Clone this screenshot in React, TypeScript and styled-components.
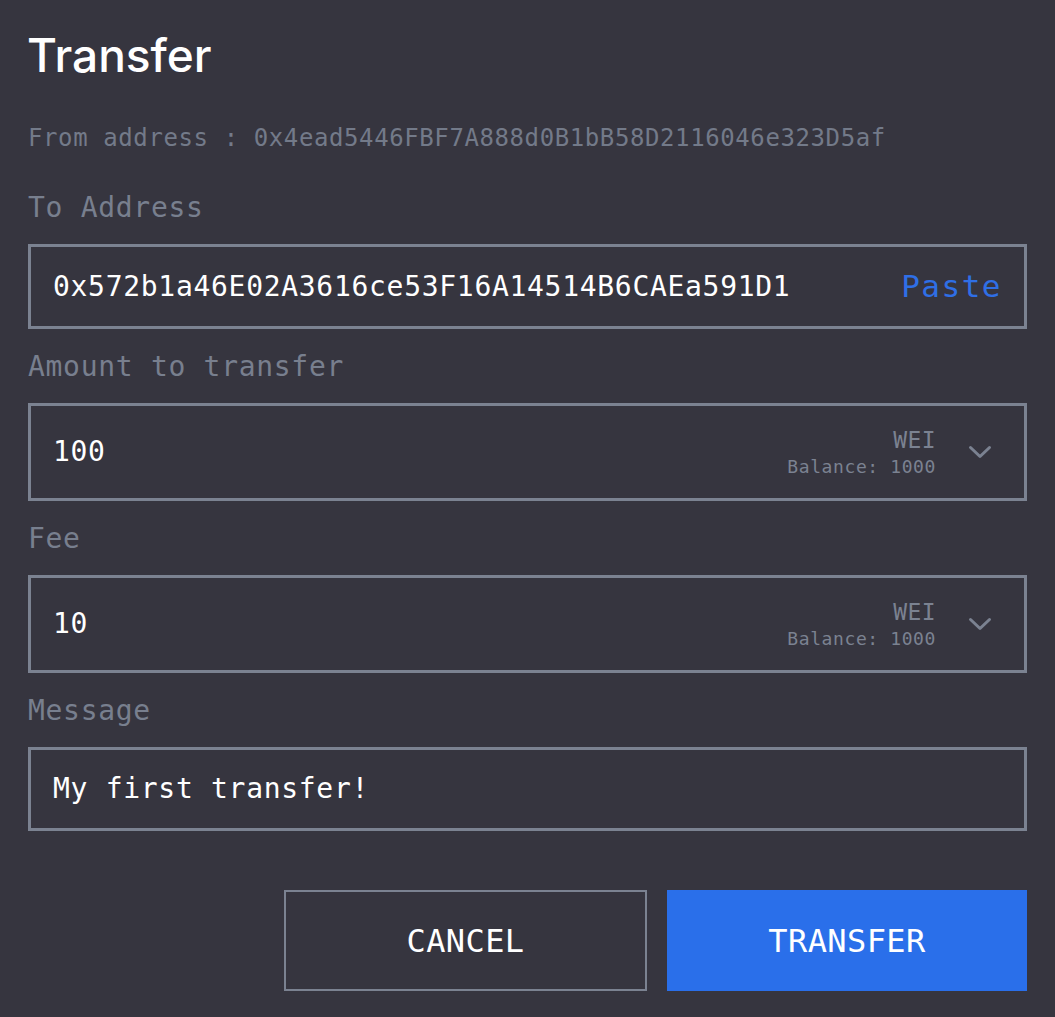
import { FC } from "react";
import styled, { createGlobalStyle } from "styled-components";

const GlobalStyle = createGlobalStyle`
  html, body {
    margin: 0;
    padding: 0;
    background-color: #36353f;
  }
  * {
    box-sizing: border-box;
  }
`;

const mono = `"DejaVu Sans Mono", "Liberation Mono", monospace`;

const Panel = styled.div`
  display: flex;
  flex-direction: column;
  padding: 32px 28px 0;
  width: 1055px;
`;

const Title = styled.h1`
  margin: 0 0 0 -1px;
  font-family: Inter, "Noto Sans", sans-serif;
  font-size: 46px;
  font-weight: 500;
  line-height: 46px;
  color: #ffffff;
`;

const FromLine = styled.p`
  margin: 48px 0 0;
  font-family: ${mono};
  font-size: 24px;
  line-height: 24px;
  letter-spacing: 0.6px;
  color: #737a89;
`;

const Form = styled.div`
  display: flex;
  flex-direction: column;
  gap: 24px;
  margin-top: 44px;
`;

const Field = styled.div`
  display: flex;
  flex-direction: column;
  gap: 22px;
`;

const Label = styled.label`
  font-family: ${mono};
  font-size: 28px;
  line-height: 28px;
  letter-spacing: 0.7px;
  color: #787f8e;
`;

const Box = styled.div<{ $height: number }>`
  display: flex;
  align-items: center;
  height: ${(p) => p.$height}px;
  border: 3px solid #7b8291;
  padding: 0 32px 0 22px;
`;

const Value = styled.span`
  flex: 1;
  font-family: ${mono};
  font-size: 28px;
  line-height: 28px;
  letter-spacing: 0.7px;
  color: #ffffff;
  white-space: nowrap;
`;

const PasteButton = styled.span`
  margin-right: -10px;
  font-family: ${mono};
  font-size: 31px;
  line-height: 31px;
  letter-spacing: 1.5px;
  color: #2f6fe6;
  cursor: pointer;
`;

const Unit = styled.div`
  display: flex;
  flex-direction: column;
  align-items: flex-end;
  gap: 6px;
  margin-right: 32px;
  font-family: ${mono};
  color: #7b8291;
`;

const UnitName = styled.span`
  font-size: 23px;
  line-height: 23px;
  letter-spacing: 0.4px;
`;

const Balance = styled.span`
  font-size: 18px;
  line-height: 18px;
  letter-spacing: 0.6px;
`;

const Chevron = () => (
  <svg width="24" height="15" viewBox="0 0 24 15" fill="none">
    <polyline
      points="2.5,2.5 12,11.5 21.5,2.5"
      stroke="#7b8291"
      strokeWidth="3"
      strokeLinecap="round"
      strokeLinejoin="round"
    />
  </svg>
);

const Actions = styled.div`
  display: flex;
  justify-content: flex-end;
  gap: 20px;
  margin-top: 59px;
`;

const Button = styled.button<{ $primary?: boolean }>`
  width: ${(p) => (p.$primary ? 360 : 363)}px;
  height: 101px;
  border: ${(p) => (p.$primary ? "none" : "2px solid #7b8291")};
  background-color: ${(p) => (p.$primary ? "#2a6fea" : "transparent")};
  color: #ffffff;
  font-family: ${mono};
  font-size: 32px;
  letter-spacing: 0.4px;
  cursor: pointer;
`;

interface AmountFieldProps {
  label: string;
  value: string;
  unit: string;
  balance: string;
}

const AmountField: FC<AmountFieldProps> = ({ label, value, unit, balance }) => (
  <Field>
    <Label>{label}</Label>
    <Box $height={98}>
      <Value>{value}</Value>
      <Unit>
        <UnitName>{unit}</UnitName>
        <Balance>Balance: {balance}</Balance>
      </Unit>
      <Chevron />
    </Box>
  </Field>
);

const App: FC = () => {
  return (
    <>
      <GlobalStyle />
      <Panel>
        <Title>Transfer</Title>
        <FromLine>From address : 0x4ead5446FBF7A888d0B1bB58D2116046e323D5af</FromLine>
        <Form>
          <Field>
            <Label>To Address</Label>
            <Box $height={85}>
              <Value>0x572b1a46E02A3616ce53F16A14514B6CAEa591D1</Value>
              <PasteButton>Paste</PasteButton>
            </Box>
          </Field>
          <AmountField label="Amount to transfer" value="100" unit="WEI" balance="1000" />
          <AmountField label="Fee" value="10" unit="WEI" balance="1000" />
          <Field>
            <Label>Message</Label>
            <Box $height={84}>
              <Value>My first transfer!</Value>
            </Box>
          </Field>
        </Form>
        <Actions>
          <Button>CANCEL</Button>
          <Button $primary>TRANSFER</Button>
        </Actions>
      </Panel>
    </>
  );
};

export default App;
